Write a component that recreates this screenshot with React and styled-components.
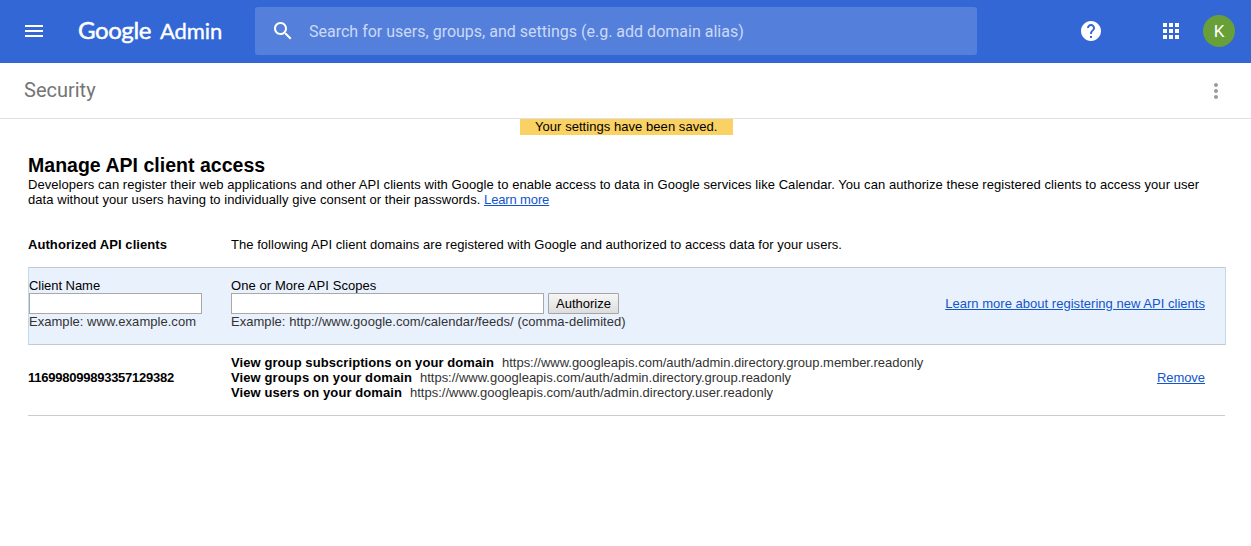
import React from "react";
import styled, { createGlobalStyle, css } from "styled-components";

const GlobalStyle = createGlobalStyle`
  * { box-sizing: border-box; }
  body {
    margin: 0;
    background: #fff;
    color: #000;
    font: 13px/15px Arial, "Liberation Sans", sans-serif;
  }
`;

const Header = styled.header`
  display: flex;
  align-items: center;
  height: 63px;
  padding: 0 16px 1px 22px;
  background: #3367d6;
  color: #fff;
`;

const Icon = styled.svg`
  display: block;
  flex: none;
  width: 24px;
  height: 24px;
  fill: currentColor;
`;

const Logo = styled.div`
  display: flex;
  align-items: baseline;
  width: 177px;
  margin-left: 32px;
  padding-bottom: 2px;
  font-family: Lato, sans-serif;
  line-height: 30px;
  white-space: nowrap;
`;

const LogoBrand = styled.span`
  width: 82px;
  font-size: 24px;
  letter-spacing: -0.4px;
  -webkit-text-stroke: 0.5px #fff;
`;

const LogoProduct = styled.span`
  font-size: 22px;
  letter-spacing: -0.1px;
  -webkit-text-stroke: 0.35px #fff;
`;

const SearchBox = styled.div`
  display: flex;
  align-items: center;
  width: 722px;
  height: 48px;
  padding-left: 16px;
  border-radius: 3px;
  background: #5480dc;
`;

const SearchHint = styled.span`
  margin-left: 14px;
  padding-top: 2px;
  color: #ccd9f5;
  font: 16px/24px Roboto, sans-serif;
  letter-spacing: 0.005px;
`;

const HeaderActions = styled.div`
  display: flex;
  align-items: center;
  margin-left: auto;
`;

const AppsIcon = styled(Icon)`
  margin: 0 20px 0 56px;
`;

const Avatar = styled.div`
  display: grid;
  place-items: center;
  width: 32px;
  height: 32px;
  border-radius: 50%;
  background: #689f38;
  font: 17px/32px Roboto, sans-serif;
`;

const SubHeader = styled.div`
  display: flex;
  align-items: center;
  justify-content: space-between;
  height: 56px;
  padding: 0 23px 0 24px;
  border-bottom: 1px solid #e0e0e0;
  color: #757575;
  font: 20px/24px Roboto, sans-serif;
`;

const PageName = styled.span`
  padding-bottom: 2px;
`;

const MoreIcon = styled(Icon)`
  color: #9a9a9a;
`;

const Notice = styled.div`
  width: 213px;
  height: 16px;
  margin-left: 520px;
  padding-left: 15px;
  background: #fad163;
  letter-spacing: 0.05px;
`;

const Content = styled.main`
  width: 1226px;
  padding: 19px 0 0 28px;
`;

const Title = styled.h1`
  margin: 0;
  font-size: 19.5px;
  line-height: 23px;
  letter-spacing: 0.02px;
`;

const Text = styled.span`
  letter-spacing: ${({ $track = 0 }) => $track}px;
  white-space: pre;
  ${({ $bold }) => $bold && css`font-weight: bold;`}
  ${({ $muted }) => $muted && css`color: #333;`}
`;

const Link = styled.a`
  color: #15c;
  letter-spacing: ${({ $track = 0 }) => $track}px;
  text-decoration: underline;
  white-space: nowrap;
  cursor: pointer;
`;

const Intro = styled.p`
  margin: 0;
`;

const SectionHead = styled.div`
  display: grid;
  grid-template-columns: 203px 1fr;
  margin: 30px 0 15px;
`;

const AddClient = styled.form`
  display: grid;
  grid-template-columns: 202px 1fr auto;
  align-items: center;
  padding: 10px 20px 15px 0;
  border: 1px solid #c5c8cc;
  border-left-color: #bcdcf2;
  border-right-color: #c3d9e9;
  background: #e9f1fd;
`;

const Field = styled.div`
  display: flex;
  flex-direction: column;
  align-items: flex-start;
`;

const Controls = styled.div`
  display: flex;
  gap: 4px;
  height: 21px;
`;

const Input = styled.input`
  width: ${({ $width }) => $width}px;
  height: 21px;
  margin: 0;
  padding: 1px;
  border: 1px solid #a9a9a9;
  border-radius: 0;
  background: #fff;
  outline: none;
`;

const Button = styled.button`
  width: 71px;
  height: 21px;
  padding: 0;
  border: 1px solid #a5a5a5;
  border-radius: 1px;
  background: linear-gradient(#f6f6f6, #ddd);
  color: #000;
  font: 13px/15px Arial, "Liberation Sans", sans-serif;
`;

const ClientRow = styled.div`
  display: grid;
  grid-template-columns: 203px 1fr auto;
  align-items: center;
  width: 1197px;
  padding: 10px 20px 15px 0;
  border-bottom: 1px solid #ccc;
`;

const ScopeList = styled.div`
  display: grid;
`;

const Scope = styled.div`
  display: flex;
  gap: 8px;
`;

const scopes = [
  { name: "View group subscriptions on your domain", track: 0.083, url: "https://www.googleapis.com/auth/admin.directory.group.member.readonly", urlTrack: -0.018 },
  { name: "View groups on your domain", track: 0.109, url: "https://www.googleapis.com/auth/admin.directory.group.readonly", urlTrack: -0.013 },
  { name: "View users on your domain", track: 0.088, url: "https://www.googleapis.com/auth/admin.directory.user.readonly", urlTrack: -0.002 },
];

export default function App() {
  return (
    <>
      <GlobalStyle />
      <Header>
        <Icon viewBox="0 0 24 24"><path d="M3 18h18v-2H3v2zm0-5h18v-2H3v2zm0-7v2h18V6H3z" /></Icon>
        <Logo>
          <LogoBrand>Google</LogoBrand>
          <LogoProduct>Admin</LogoProduct>
        </Logo>
        <SearchBox>
          <Icon viewBox="0 0 24 24"><path d="M15.5 14h-.79l-.28-.27C15.41 12.59 16 11.11 16 9.5 16 5.91 13.09 3 9.5 3S3 5.91 3 9.5 5.91 16 9.5 16c1.61 0 3.09-.59 4.23-1.57l.27.28v.79l5 4.99L20.49 19l-4.99-5zm-6 0C7.01 14 5 11.99 5 9.5S7.01 5 9.5 5 14 7.01 14 9.5 11.99 14 9.5 14z" /></Icon>
          <SearchHint>Search for users, groups, and settings (e.g. add domain alias)</SearchHint>
        </SearchBox>
        <HeaderActions>
          <Icon viewBox="0 0 24 24"><path d="M12 2C6.48 2 2 6.48 2 12s4.48 10 10 10 10-4.48 10-10S17.52 2 12 2zm1 17h-2v-2h2v2zm2.07-7.75l-.9.92C13.45 12.9 13 13.5 13 15h-2v-.5c0-1.1.45-2.1 1.17-2.83l1.24-1.26c.37-.36.59-.86.59-1.41 0-1.1-.9-2-2-2s-2 .9-2 2H8c0-2.21 1.79-4 4-4s4 1.79 4 4c0 .88-.36 1.68-.93 2.25z" /></Icon>
          <AppsIcon viewBox="0 0 24 24"><path d="M4 8h4V4H4v4zm6 12h4v-4h-4v4zm-6 0h4v-4H4v4zm0-6h4v-4H4v4zm6 0h4v-4h-4v4zm6-10v4h4V4h-4zm-6 4h4V4h-4v4zm6 6h4v-4h-4v4zm0 6h4v-4h-4v4z" /></AppsIcon>
          <Avatar>K</Avatar>
        </HeaderActions>
      </Header>
      <SubHeader>
        <PageName>Security</PageName>
        <MoreIcon viewBox="0 0 24 24"><path d="M12 8c1.1 0 2-.9 2-2s-.9-2-2-2-2 .9-2 2 .9 2 2 2zm0 2c-1.1 0-2 .9-2 2s.9 2 2 2 2-.9 2-2-.9-2-2-2zm0 6c-1.1 0-2 .9-2 2s.9 2 2 2 2-.9 2-2-.9-2-2-2z" /></MoreIcon>
      </SubHeader>
      <Notice>Your settings have been saved.</Notice>
      <Content>
        <Title>Manage API client access</Title>
        <Intro>
          <Text $track={0.06}>Developers can register their web applications and other API clients with Google to enable access to data in Google services like Calendar. You can authorize these registered clients to access your user</Text>
          <br />
          <Text $track={0.055}>{"data without your users having to individually give consent or their passwords. "}</Text>
          <Link $track={-0.13}>Learn more</Link>
        </Intro>
        <SectionHead>
          <Text $bold $track={0.07}>Authorized API clients</Text>
          <Text $track={0.038}>The following API client domains are registered with Google and authorized to access data for your users.</Text>
        </SectionHead>
        <AddClient>
          <Field>
            <Text $track={-0.04}>Client Name</Text>
            <Input $width={173} />
            <Text $muted $track={0.035}>Example: www.example.com</Text>
          </Field>
          <Field>
            <Text $track={0.075}>One or More API Scopes</Text>
            <Controls>
              <Input $width={313} />
              <Button type="button">Authorize</Button>
            </Controls>
            <Text $muted $track={0.036}>Example: http://www.google.com/calendar/feeds/ (comma-delimited)</Text>
          </Field>
          <Link $track={0.025}>Learn more about registering new API clients</Link>
        </AddClient>
        <ClientRow>
          <Text $bold $track={-0.243}>116998099893357129382</Text>
          <ScopeList>
            {scopes.map((scope) => (
              <Scope key={scope.url}>
                <Text $bold $track={scope.track}>{scope.name}</Text>
                <Text $muted $track={scope.urlTrack}>{scope.url}</Text>
              </Scope>
            ))}
          </ScopeList>
          <Link $track={-0.05}>Remove</Link>
        </ClientRow>
      </Content>
    </>
  );
}
